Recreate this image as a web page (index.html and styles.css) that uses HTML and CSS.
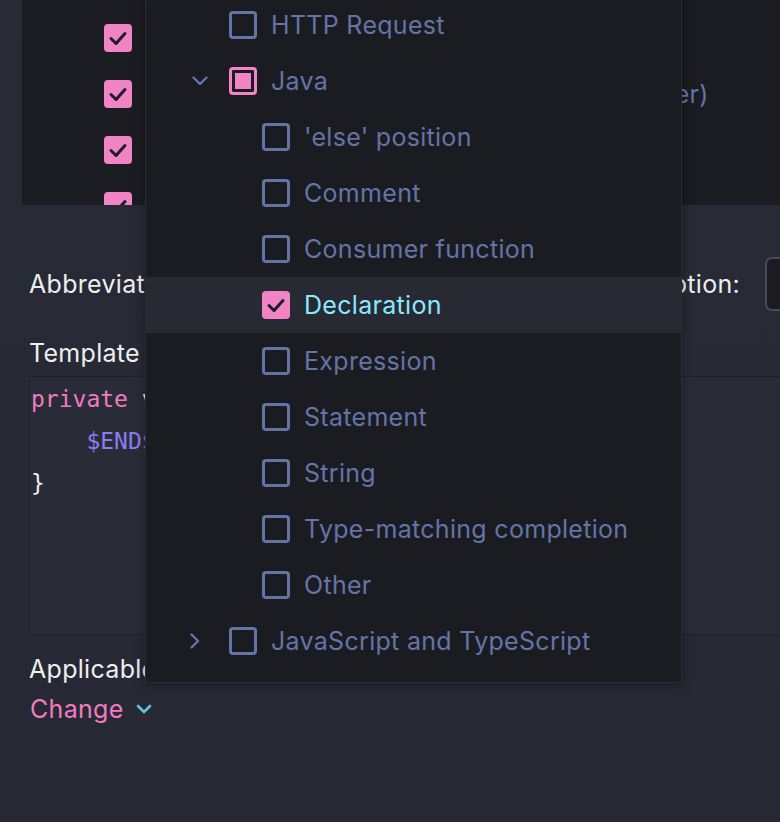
FILE: index.html
```html
<!DOCTYPE html>
<html>
<head>
<meta charset="utf-8">
<link rel="stylesheet" href="styles.css">
</head>
<body>
<div class="page">
  <div class="tpl-list">
    <div class="tpl-row"><span class="cb cb-on"><svg viewBox="0 0 28 28"><path d="M7 14.5l5 5 9-10"/></svg></span><span class="tpl-label">iter (Iterate elements of array or iterable)</span></div>
    <div class="tpl-row"><span class="cb cb-on"><svg viewBox="0 0 28 28"><path d="M7 14.5l5 5 9-10"/></svg></span><span class="tpl-label">lazy (Initialize field on first access by the user)</span></div>
    <div class="tpl-row"><span class="cb cb-on"><svg viewBox="0 0 28 28"><path d="M7 14.5l5 5 9-10"/></svg></span><span class="tpl-label">psfs (public static final String)</span></div>
    <div class="tpl-row"><span class="cb cb-on"><svg viewBox="0 0 28 28"><path d="M7 14.5l5 5 9-10"/></svg></span><span class="tpl-label">sout (Prints a string to System.out)</span></div>
  </div>

  <div class="form">
    <div class="field-row">
      <span class="label">Abbreviation:</span>
      <span class="input input-grow"></span>
      <span class="label">Description:</span>
      <span class="input input-desc"></span>
    </div>
    <div class="label template-label">Template text:</div>
    <div class="code">
      <div class="code-line"><span class="kw">private </span><span class="plain">void $NAME$() {</span></div>
      <div class="code-line"><span class="plain">    </span><span class="var">$END$</span></div>
      <div class="code-line"><span class="plain">}</span></div>
    </div>
    <div class="label applicable">Applicable in Java: declaration.</div>
    <div class="change">Change <svg class="change-chev" viewBox="0 0 16 10"><path d="M2 2l6 6 6-6"/></svg></div>
  </div>

  <div class="popup">
    <div class="prow lvl1"><span class="chev"></span><span class="cb"></span><span class="plabel">HTTP Request</span></div>
    <div class="prow lvl1"><span class="chev"><svg class="chev-down" viewBox="0 0 16 10"><path d="M1.5 1.5l6.5 6.5 6.5-6.5"/></svg></span><span class="cb cb-mixed"></span><span class="plabel">Java</span></div>
    <div class="prow lvl2"><span class="chev"></span><span class="cb"></span><span class="plabel">'else' position</span></div>
    <div class="prow lvl2"><span class="chev"></span><span class="cb"></span><span class="plabel">Comment</span></div>
    <div class="prow lvl2"><span class="chev"></span><span class="cb"></span><span class="plabel">Consumer function</span></div>
    <div class="prow lvl2 selected"><span class="chev"></span><span class="cb cb-on"><svg viewBox="0 0 28 28"><path d="M7 14.5l5 5 9-10"/></svg></span><span class="plabel">Declaration</span></div>
    <div class="prow lvl2"><span class="chev"></span><span class="cb"></span><span class="plabel">Expression</span></div>
    <div class="prow lvl2"><span class="chev"></span><span class="cb"></span><span class="plabel">Statement</span></div>
    <div class="prow lvl2"><span class="chev"></span><span class="cb"></span><span class="plabel">String</span></div>
    <div class="prow lvl2"><span class="chev"></span><span class="cb"></span><span class="plabel">Type-matching completion</span></div>
    <div class="prow lvl2"><span class="chev"></span><span class="cb"></span><span class="plabel">Other</span></div>
    <div class="prow lvl1"><span class="chev"><svg class="chev-right" viewBox="0 0 10 16"><path d="M1.5 1.5l6.5 6.5-6.5 6.5"/></svg></span><span class="cb"></span><span class="plabel">JavaScript and TypeScript</span></div>
  </div>
</div>
</body>
</html>
```

FILE: styles.css
```css
* { box-sizing: border-box; }

html, body {
  margin: 0;
  padding: 0;
}

body {
  width: 780px;
  height: 822px;
  overflow: hidden;
  background: #272935;
  font-family: Inter, "Noto Sans", sans-serif;
  font-size: 25px;
  letter-spacing: 0.3px;
  color: #eeeeee;
}

.page {
  position: relative;
  width: 780px;
  height: 822px;
  overflow: hidden;
  background: linear-gradient(#282a36, #262833);
}

/* top template list */
.tpl-list {
  margin-left: 22px;
  width: 960px;
  height: 205px;
  background: #1b1c21;
  padding: 10px 0 0 82px;
  overflow: hidden;
}

.tpl-row {
  display: flex;
  align-items: center;
  gap: 14px;
  height: 56px;
  white-space: nowrap;
}

.tpl-label {
  color: #6474a6;
}

/* checkboxes */
.cb {
  flex: 0 0 auto;
  width: 28px;
  height: 28px;
  border: 3px solid #6474a6;
  border-radius: 4px;
  display: flex;
  align-items: center;
  justify-content: center;
}

.cb svg {
  width: 28px;
  height: 28px;
  fill: none;
  stroke: #1d1e25;
  stroke-width: 3;
  stroke-linecap: round;
  stroke-linejoin: round;
}

.cb-on {
  border: none;
  background: #f283c5;
}

.cb-mixed {
  border: 3px solid #f283c5;
  background: #f283c5;
  box-shadow: inset 0 0 0 3px #1b1c21;
}

/* form */
.form {
  width: 965px;
  padding-left: 29px;
}

.label {
  color: #eeeeee;
  line-height: 28px;
  white-space: nowrap;
}

.field-row {
  margin-top: 52px;
  display: flex;
  align-items: center;
  height: 54px;
  gap: 25px;
}

.input {
  height: 54px;
  border: 2px solid #474a5b;
  border-radius: 7px;
  background: #1b1c21;
}

.input-grow {
  flex: 1 1 auto;
}

.input-desc {
  flex: 0 0 200px;
}

.template-label {
  margin-top: 28px;
}

.code {
  margin-top: 9px;
  height: 259px;
  border: 1px solid #1f2029;
  background: #292b37;
  padding: 1px 0 0 1px;
  font-family: "DejaVu Sans Mono", "Liberation Mono", monospace;
  font-size: 23px;
  letter-spacing: 0;
}

.code-line {
  height: 42px;
  line-height: 42px;
  white-space: pre;
}

.kw { color: #f07cc0; }
.var { color: #8b7cf5; }
.plain { color: #eeeeee; }

.applicable {
  margin-top: 20px;
}

.change {
  margin-top: 12px;
  display: flex;
  align-items: center;
  gap: 12px;
  color: #f07cc0;
  line-height: 28px;
  padding-left: 1px;
}

.change-chev {
  width: 16px;
  height: 10px;
  fill: none;
  stroke: #5bc8de;
  stroke-width: 2.6;
  stroke-linecap: round;
  stroke-linejoin: round;
}

/* popup tree */
.popup {
  position: absolute;
  left: 145px;
  top: -3px;
  width: 537px;
  height: 686px;
  background: #1b1c21;
  border: 1px solid #2a2b33;
  border-top: none;
  box-shadow: 0 2px 10px rgba(0, 0, 0, 0.35);
}

.prow {
  display: flex;
  align-items: center;
  height: 56px;
  white-space: nowrap;
}

.lvl1 { padding-left: 37px; }
.lvl2 { padding-left: 70px; }

.chev {
  flex: 0 0 34px;
  height: 28px;
  margin-right: 12px;
  display: flex;
  align-items: center;
  justify-content: center;
}

.chev svg {
  fill: none;
  stroke: #6474a6;
  stroke-width: 2.4;
  stroke-linecap: round;
  stroke-linejoin: round;
}

.chev-down { width: 16px; height: 10px; }
.chev-right { width: 10px; height: 16px; margin-right: 10px; }

.plabel {
  margin-left: 14px;
  color: #6474a6;
}

.selected {
  background: #272933;
}

.selected .plabel {
  color: #8be9fd;
}
```
